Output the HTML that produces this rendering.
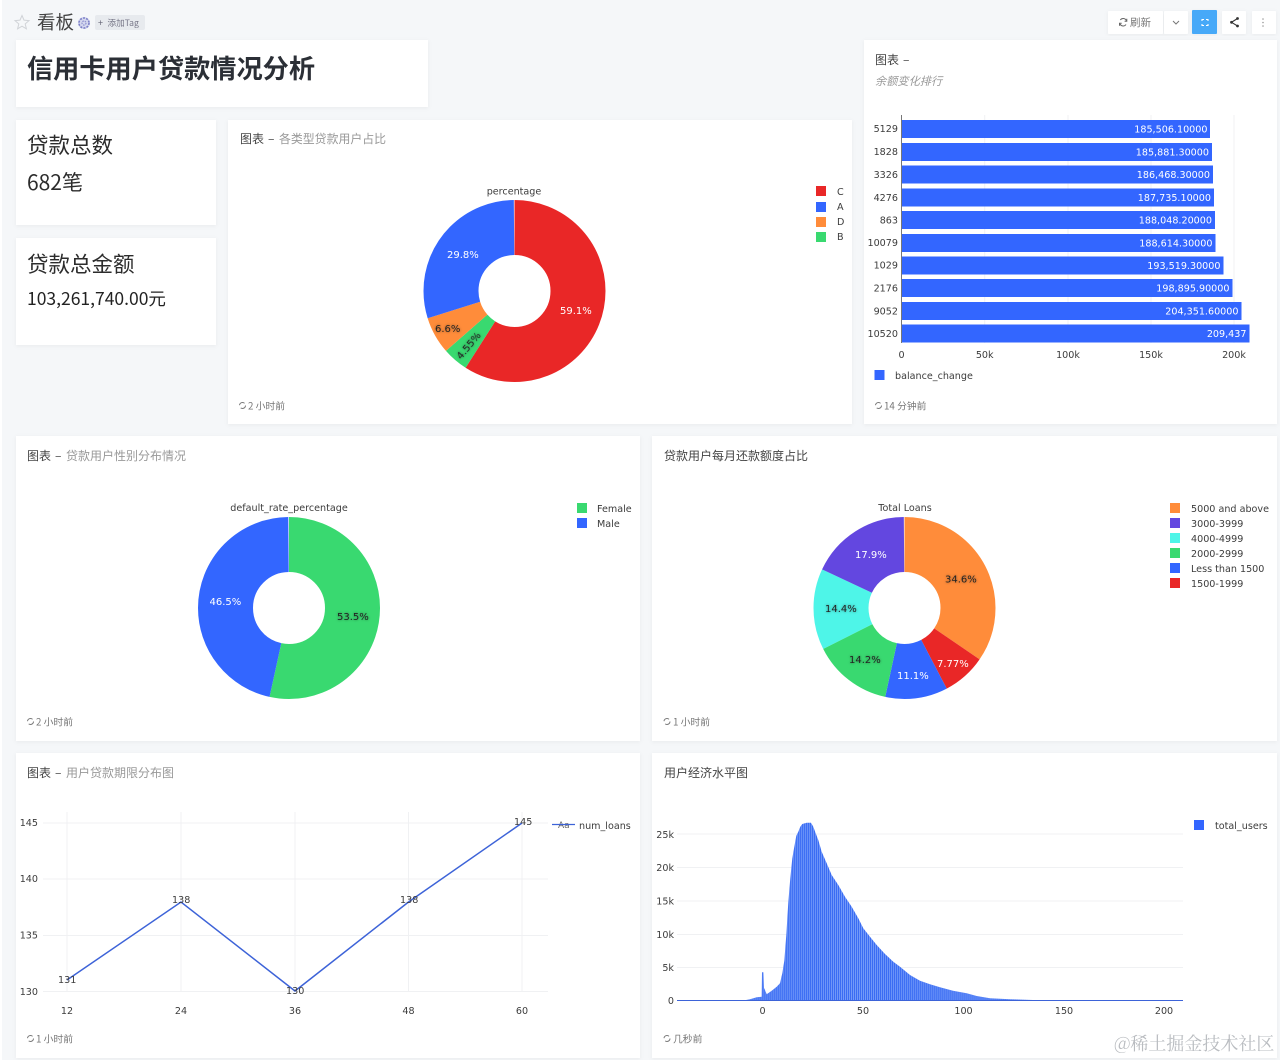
<!DOCTYPE html>
<html lang="zh"><head><meta charset="utf-8"><title>看板</title>
<style>
html,body{margin:0;padding:0;background:#f5f7f9;width:1280px;height:1060px;overflow:hidden}
svg{display:block;position:absolute;left:0;top:0;filter:blur(.35px)}
text{font-family:"DejaVu Sans",sans-serif;font-size:9.6px;fill:#3c3c3c}
.t{font-size:12px;fill:#444;font-family:"Noto Sans CJK SC",sans-serif}
.g{font-size:12px;fill:#999;font-family:"Noto Sans CJK SC",sans-serif}
.f{font-size:9.8px;fill:#777;font-family:"Noto Sans CJK SC",sans-serif}
.big{font-family:"Noto Sans CJK SC",sans-serif;fill:#2c2c2c}
.w{fill:#fff;font-size:10px}
.d{fill:#222;font-size:10px}
.bl{fill:#fff;text-anchor:end;font-size:9.6px}
.m{text-anchor:middle}
.grid{stroke:#f0f1f3;stroke-width:1}
</style></head><body>
<svg width="1280" height="1060" viewBox="0 0 1280 1060" xmlns="http://www.w3.org/2000/svg">
<defs>
<filter id="s" x="-5%" y="-5%" width="110%" height="112%"><feDropShadow dx="0" dy="1" stdDeviation="2" flood-color="#000" flood-opacity=".05"/></filter>
<filter id="h" x="-30%" y="-30%" width="160%" height="160%"><feDropShadow dx="0" dy="0" stdDeviation="1.2" flood-color="#222" flood-opacity=".5"/></filter>
<pattern id="st" width="2.008" height="10" patternUnits="userSpaceOnUse" x="0.5"><rect width="2.008" height="10" fill="#3a6cf3"/><rect x="1.2" width=".8" height="10" fill="#7ba0fa"/></pattern>
</defs>
<rect x="0" y="0" width="2" height="1060" fill="#fff"/>
<g fill="#fff" filter="url(#s)">
<rect x="16" y="40" width="412" height="67"/>
<rect x="16" y="120" width="200" height="105"/>
<rect x="16" y="238" width="200" height="107"/>
<rect x="228" y="120" width="624" height="304"/>
<rect x="864" y="40" width="413" height="384"/>
<rect x="16" y="436" width="624" height="305"/>
<rect x="652" y="436" width="625" height="305"/>
<rect x="16" y="753" width="624" height="305"/>
<rect x="652" y="753" width="625" height="305"/>
</g>

<!-- header -->
<path d="M22 15.500l2 4.600 5 .5-3.800 3.300 1.200 4.900-4.400-2.600-4.400 2.600 1.200-4.900-3.800-3.300 5-.5z" fill="none" stroke="#d0d3d7" stroke-width="1"/>
<text x="37" y="29" class="big" style="font-size:18.500px;fill:#444">看板</text>
<circle cx="84" cy="23" r="6" fill="#d5d8ee"/>
<circle cx="84" cy="23" r="5" fill="none" stroke="#7d80c8" stroke-width="1.600" stroke-dasharray="2 1.200"/>
<circle cx="84" cy="23" r="2" fill="none" stroke="#8d90d0" stroke-width="1.200" stroke-dasharray="1.500 1"/>
<rect x="95" y="15" width="50" height="15" rx="2" fill="#e7eaee"/>
<text x="98" y="26" class="big" style="font-size:9px;fill:#667">+</text>
<text x="107.500" y="26" class="big" style="font-size:8.600px;fill:#778">添加Tag</text>

<g filter="url(#s)">
<rect x="1108" y="11" width="55" height="23" fill="#fff" rx="1"/>
<rect x="1164" y="11" width="24" height="23" fill="#fff" rx="1"/>
<rect x="1192" y="10" width="25" height="24" fill="#46a9f8" rx="1"/>
<rect x="1222" y="11" width="24" height="23" fill="#fff" rx="1"/>
<rect x="1252" y="11" width="24" height="23" fill="#fff" rx="1"/>
</g>
<path d="M1126.300 20.500a3.500 3.500 0 0 0-6-.5M1120 24a3.500 3.500 0 0 0 6 .5M1126.800 18.800v2.400h-2.200M1119.500 25.700v-2.400h2.200" fill="none" stroke="#666" stroke-width="1"/>
<text x="1130" y="26" class="big" style="font-size:10.500px;fill:#777">刷新</text>
<path d="M1173 21l3 3 3-3" fill="none" stroke="#777" stroke-width="1"/>
<path d="M1202 21v-1.500h2M1206 19.500h2v1.500M1208 24v1.500h-2M1204 25.500h-2V24" fill="none" stroke="#fff" stroke-width="1.100"/>
<path d="M1237.500 18.500l-6 3.800 6 3.700" fill="none" stroke="#333" stroke-width="1.100"/><circle cx="1237.500" cy="18.500" r="1.400" fill="#333"/><circle cx="1231.500" cy="22.300" r="1.400" fill="#333"/><circle cx="1237.500" cy="26" r="1.400" fill="#333"/>
<g fill="#999"><circle cx="1263" cy="19" r=".8"/><circle cx="1263" cy="22.500" r=".8"/><circle cx="1263" cy="26" r=".8"/></g>

<!-- title + stats -->
<text x="27" y="78" class="big" style="font-size:26.200px;font-weight:700;fill:#2b2f36">信用卡用户贷款情况分析</text>
<text x="27" y="153" class="big" style="font-size:21.500px">贷款总数</text>
<text x="27" y="190" class="big" style="font-size:21px">682笔</text>
<text x="27" y="272" class="big" style="font-size:21.500px">贷款总金额</text>
<text x="27" y="305" class="big" style="font-size:17.500px;fill:#222">103,261,740.00元</text>

<!-- pie 1 -->
<text x="240" y="143" class="t">图表</text><text x="268" y="143" class="t">–</text><text x="279" y="143" class="g" style="font-size:11.900px">各类型贷款用户占比</text>
<text x="514" y="194.500" class="m">percentage</text>
<g fill="none" stroke-width="55" transform="rotate(-90 514.500 291)">
<circle cx="514.500" cy="291" r="63.500" pathLength="100" stroke="#e92727" stroke-dasharray="59.100 100"/>
<circle cx="514.500" cy="291" r="63.500" pathLength="100" stroke="#39d970" stroke-dasharray="4.550 100" stroke-dashoffset="-59.100"/>
<circle cx="514.500" cy="291" r="63.500" pathLength="100" stroke="#ff8c3a" stroke-dasharray="6.600 100" stroke-dashoffset="-63.650"/>
<circle cx="514.500" cy="291" r="63.500" pathLength="100" stroke="#3366ff" stroke-dasharray="29.750 100" stroke-dashoffset="-70.250"/>
</g>
<text x="447" y="258" class="w">29.8%</text>
<text x="560" y="314" class="w">59.1%</text>
<text x="435" y="332" class="d" filter="url(#h)">6.6%</text>
<text transform="translate(461 360) rotate(-50)" class="d" filter="url(#h)">4.55%</text>
<rect x="816" y="186" width="10" height="10" fill="#e92727"/><text x="837" y="195">C</text>
<rect x="816" y="202" width="10" height="10" fill="#3366ff"/><text x="837" y="210">A</text>
<rect x="816" y="217" width="10" height="10" fill="#ff8c3a"/><text x="837" y="225">D</text>
<rect x="816" y="232" width="10" height="10" fill="#39d970"/><text x="837" y="240">B</text>
<g fill="none" stroke="#777"><circle cx="242.500" cy="405.500" r="3" stroke-dasharray="6.500 3" /></g>
<text x="248" y="409.500" class="f">2 小时前</text>

<!-- bar chart -->
<text x="875" y="64" class="t">图表</text><text x="903" y="64" class="t">–</text>
<text x="875" y="85" class="g" style="font-style:italic;font-size:11.200px">余额变化排行</text>
<path d="M984.700 115v228M1068 115v228M1151 115v228M1234 115v228" class="grid"/>
<path d="M901.500 115v228" stroke="#777" stroke-width="1"/>
<g fill="#3366ff">
<rect x="902" y="120" width="308" height="18"/>
<rect x="902" y="143" width="310" height="18"/>
<rect x="902" y="165.500" width="311" height="18"/>
<rect x="902" y="188.500" width="312" height="18"/>
<rect x="902" y="211" width="313" height="18"/>
<rect x="902" y="234" width="313.500" height="18"/>
<rect x="902" y="256.500" width="321.500" height="18"/>
<rect x="902" y="279" width="330.500" height="18"/>
<rect x="902" y="302" width="339.500" height="18"/>
<rect x="902" y="324.500" width="347.500" height="18"/>
</g>
<g>
<text x="1207.500" y="132.500" class="bl">185,506.10000</text>
<text x="1209" y="155.500" class="bl">185,881.30000</text>
<text x="1210" y="178" class="bl">186,468.30000</text>
<text x="1211" y="201" class="bl">187,735.10000</text>
<text x="1212" y="223.500" class="bl">188,048.20000</text>
<text x="1212.500" y="246.500" class="bl">188,614.30000</text>
<text x="1220.500" y="269" class="bl">193,519.30000</text>
<text x="1229.500" y="291.500" class="bl">198,895.90000</text>
<text x="1238.500" y="314.500" class="bl">204,351.60000</text>
<text x="1246.500" y="337" class="bl">209,437</text>
</g>
<g text-anchor="end">
<text x="898" y="132">5129</text><text x="898" y="155">1828</text><text x="898" y="178">3326</text><text x="898" y="201">4276</text><text x="898" y="223.500">863</text><text x="898" y="246">10079</text><text x="898" y="268.500">1029</text><text x="898" y="291.500">2176</text><text x="898" y="314.500">9052</text><text x="898" y="337">10520</text>
</g>
<g text-anchor="middle"><text x="901.500" y="358">0</text><text x="984.700" y="358">50k</text><text x="1068" y="358">100k</text><text x="1151" y="358">150k</text><text x="1234" y="358">200k</text></g>
<rect x="874.500" y="370" width="10" height="10" fill="#3366ff"/><text x="895" y="379">balance_change</text>
<g fill="none" stroke="#777"><circle cx="878.500" cy="405.500" r="3" stroke-dasharray="6.500 3"/></g>
<text x="884" y="409.500" class="f">14 分钟前</text>

<!-- pie 2 -->
<text x="27" y="460" class="t">图表</text><text x="55" y="460" class="t">–</text><text x="66" y="460" class="g" style="font-size:12px">贷款用户性别分布情况</text>
<text x="289" y="511" text-anchor="middle">default_rate_percentage</text>
<g fill="none" stroke-width="55" transform="rotate(-90 289 608)">
<circle cx="289" cy="608" r="63.500" pathLength="100" stroke="#39d970" stroke-dasharray="53.500 100"/>
<circle cx="289" cy="608" r="63.500" pathLength="100" stroke="#3366ff" stroke-dasharray="46.500 100" stroke-dashoffset="-53.500"/>
</g>
<text x="209.500" y="605" class="w">46.5%</text>
<text x="337" y="620" class="d" filter="url(#h)">53.5%</text>
<rect x="577" y="503" width="10" height="10" fill="#39d970"/><text x="597" y="512">Female</text>
<rect x="577" y="518" width="10" height="10" fill="#3366ff"/><text x="597" y="527">Male</text>
<g fill="none" stroke="#777"><circle cx="30.500" cy="721.500" r="3" stroke-dasharray="6.500 3"/></g>
<text x="36" y="725.500" class="f">2 小时前</text>

<!-- pie 3 -->
<text x="664" y="460" class="t">贷款用户每月还款额度占比</text>
<text x="905" y="511" text-anchor="middle">Total Loans</text>
<g fill="none" stroke-width="55" transform="rotate(-90 904.500 608)">
<circle cx="904.500" cy="608" r="63.500" pathLength="100" stroke="#ff8c3a" stroke-dasharray="34.600 100"/>
<circle cx="904.500" cy="608" r="63.500" pathLength="100" stroke="#e92727" stroke-dasharray="7.770 100" stroke-dashoffset="-34.600"/>
<circle cx="904.500" cy="608" r="63.500" pathLength="100" stroke="#3366ff" stroke-dasharray="11.100 100" stroke-dashoffset="-42.370"/>
<circle cx="904.500" cy="608" r="63.500" pathLength="100" stroke="#39d970" stroke-dasharray="14.200 100" stroke-dashoffset="-53.470"/>
<circle cx="904.500" cy="608" r="63.500" pathLength="100" stroke="#4ef5e8" stroke-dasharray="14.400 100" stroke-dashoffset="-67.670"/>
<circle cx="904.500" cy="608" r="63.500" pathLength="100" stroke="#6347e0" stroke-dasharray="17.930 100" stroke-dashoffset="-82.070"/>
</g>
<text x="855" y="558" class="w">17.9%</text>
<text x="945" y="582.500" class="d" filter="url(#h)">34.6%</text>
<text x="825" y="612" class="d" filter="url(#h)">14.4%</text>
<text x="849" y="663" class="d" filter="url(#h)">14.2%</text>
<text x="897" y="679" class="w">11.1%</text>
<text x="937" y="667" class="w">7.77%</text>
<rect x="1170" y="503" width="10" height="10" fill="#ff8c3a"/><text x="1191" y="512">5000 and above</text>
<rect x="1170" y="518" width="10" height="10" fill="#6347e0"/><text x="1191" y="527">3000-3999</text>
<rect x="1170" y="533" width="10" height="10" fill="#4ef5e8"/><text x="1191" y="542">4000-4999</text>
<rect x="1170" y="548" width="10" height="10" fill="#39d970"/><text x="1191" y="557">2000-2999</text>
<rect x="1170" y="563" width="10" height="10" fill="#3366ff"/><text x="1191" y="572">Less than 1500</text>
<rect x="1170" y="578" width="10" height="10" fill="#e92727"/><text x="1191" y="587">1500-1999</text>
<g fill="none" stroke="#777"><circle cx="667" cy="721.500" r="3" stroke-dasharray="6.500 3"/></g>
<text x="673" y="725.500" class="f">1 小时前</text>

<!-- line chart -->
<text x="27" y="777" class="t">图表</text><text x="55" y="777" class="t">–</text><text x="66" y="777" class="g">用户贷款期限分布图</text>
<path d="M43 823h505M43 879h505M43 935.500h505M43 991.500h505M67 812v180M181 812v180M295 812v180M408.500 812v180M522 812v180" class="grid"/>
<polyline points="67,980 181,902 295,991 408.500,902 522,823" fill="none" stroke="#3d63d8" stroke-width="1.500"/>
<text x="58" y="983">131</text><text x="172" y="903">138</text><text x="286" y="994">130</text><text x="400" y="903">138</text><text x="514" y="825">145</text>
<g text-anchor="end"><text x="38" y="826">145</text><text x="38" y="882">140</text><text x="38" y="938.500">135</text><text x="38" y="995">130</text></g>
<g text-anchor="middle"><text x="67" y="1014">12</text><text x="181" y="1014">24</text><text x="295" y="1014">36</text><text x="408.500" y="1014">48</text><text x="522" y="1014">60</text></g>
<text x="558" y="828" style="font-size:9px;fill:#666">Aa</text>
<path d="M552 824.500h23" stroke="#3d63d8" stroke-width="1.300"/>
<text x="579" y="829">num_loans</text>
<g fill="none" stroke="#777"><circle cx="30.500" cy="1038.500" r="3" stroke-dasharray="6.500 3"/></g>
<text x="36" y="1042.500" class="f">1 小时前</text>

<!-- histogram -->
<text x="664" y="777" class="t">用户经济水平图</text>
<path d="M677 834h506M677 867.500h506M677 901h506M677 934.500h506M677 967.500h506" class="grid"/>
<path fill="url(#st)" d="M746 1000L750 999.300 756.700 997.300 761.700 996.700 762 972.300 763.500 972.300 764 988 765 990 766.700 994.300 771.700 990.700 776.700 986.700 780 983.300 782.300 973.300 784.300 960.700 786.300 935 788.300 902.300 790.300 878.300 792.300 858.300 794.300 846.700 796.300 835.700 798.300 831.700 800.300 826.700 802.300 824 806.700 822.700 811 822.700 813.300 826.700 815.700 833.300 818.300 840 821.700 851.700 826.700 863.300 831.700 875 838.300 885 845 896.700 851.700 906.700 858.300 918.300 863.300 928.300 870 936.700 876.700 945 885 954 893.300 961.700 900 966.700 910 975 920 980.700 930 984.300 940 987.300 953 990.700 966.700 993.300 976.700 996 990 998.300 1010 999.300 1033 1000 1040 1000.300V1001H746z"/>
<path d="M677 1000.500h506" stroke="#3d63d8" stroke-width="1"/>
<g text-anchor="end"><text x="674" y="838">25k</text><text x="674" y="871">20k</text><text x="674" y="904.500">15k</text><text x="674" y="938">10k</text><text x="674" y="971">5k</text><text x="674" y="1004">0</text></g>
<g text-anchor="middle"><text x="762.500" y="1014">0</text><text x="863" y="1014">50</text><text x="963.500" y="1014">100</text><text x="1064" y="1014">150</text><text x="1164" y="1014">200</text></g>
<rect x="1194" y="820" width="10" height="10" fill="#3366ff"/><text x="1215" y="829">total_users</text>
<g fill="none" stroke="#777"><circle cx="667" cy="1038.500" r="3" stroke-dasharray="6.500 3"/></g>
<text x="673" y="1042.500" class="f">几秒前</text>

<text x="1114" y="1050" style="font-family:'Noto Serif CJK SC',serif;font-size:18px;fill:#b9bcc0">@稀土掘金技术社区</text>
</svg>
</body></html>
